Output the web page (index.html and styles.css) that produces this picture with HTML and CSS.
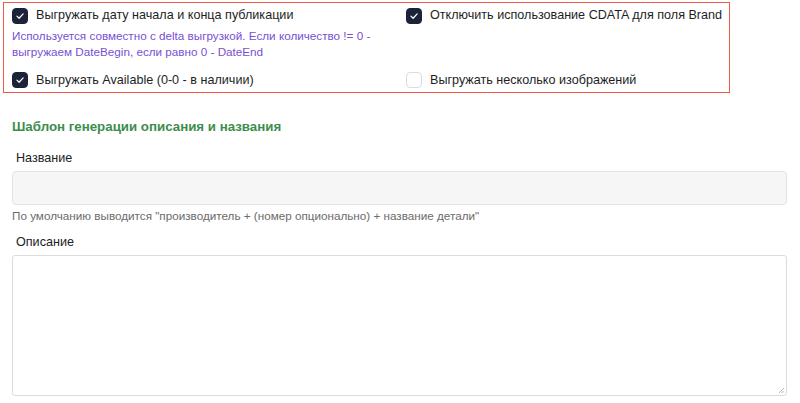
FILE: index.html
```html
<!DOCTYPE html>
<html lang="ru">
<head>
<meta charset="utf-8">
<link rel="stylesheet" href="styles.css">
</head>
<body>
<div class="page">
  <div class="options">
    <div class="col">
      <label class="check"><span class="box on"><svg viewBox="0 0 16 16"><path d="M4.5 8.2 L7 10.6 L11.6 5.6" /></svg></span>Выгружать дату начала и конца публикации</label>
      <p class="hint">Используется совместно с delta выгрузкой. Если количество != 0 - выгружаем DateBegin, если равно 0 - DateEnd</p>
      <label class="check bottom"><span class="box on"><svg viewBox="0 0 16 16"><path d="M4.5 8.2 L7 10.6 L11.6 5.6" /></svg></span>Выгружать Available (0-0 - в наличии)</label>
    </div>
    <div class="col">
      <label class="check"><span class="box on"><svg viewBox="0 0 16 16"><path d="M4.5 8.2 L7 10.6 L11.6 5.6" /></svg></span>Отключить использование CDATA для поля Brand</label>
      <div class="spacer"></div>
      <label class="check bottom"><span class="box"></span>Выгружать несколько изображений</label>
    </div>
  </div>

  <h3 class="section">Шаблон генерации описания и названия</h3>

  <div class="field">
    <div class="label">Название</div>
    <div class="input"></div>
    <div class="help">По умолчанию выводится "производитель + (номер опционально) + название детали"</div>
  </div>

  <div class="field">
    <div class="label">Описание</div>
    <div class="textarea"><svg class="grip" viewBox="0 0 8 8"><path d="M7 2 L2 7 M7 4.5 L4.5 7 M7 6.5 L6.5 7"/></svg></div>
  </div>
</div>
</body>
</html>
```

FILE: styles.css
```css
* { box-sizing: border-box; }
html, body { margin: 0; padding: 0; background: #fff; }
body {
  font-family: "Liberation Sans", Arial, sans-serif;
  color: #1f1f1f;
  font-size: 13px;
}
.page {
  padding: 2px 13px 0 3px;
}
.options {
  width: 727px;
  border: 1px solid #ee5a45;
  display: grid;
  grid-template-columns: 394px 1fr;
  padding: 4px 8px 3px 8px;
}
.col {
  display: flex;
  flex-direction: column;
}
.check {
  display: flex;
  align-items: center;
  height: 17px;
  font-size: 12.6px;
  color: #1e1e1e;
  line-height: 17px;
  white-space: nowrap;
}
.box {
  width: 16px;
  height: 16px;
  border-radius: 4px;
  border: 1px solid #d8dbe0;
  background: #fff;
  margin-right: 8px;
  flex: none;
  display: flex;
}
.box.on {
  background: #1c2238;
  border-color: #1c2238;
}
.box svg {
  width: 14px;
  height: 14px;
  fill: none;
  stroke: #fff;
  stroke-width: 1.4;
  stroke-linecap: round;
  stroke-linejoin: round;
}
.hint {
  margin: 4px 0 0 0;
  max-width: 372px;
  font-size: 11.7px;
  line-height: 16px;
  color: #7a4fd4;
}
.spacer { flex: 1; }
.check.bottom { margin-top: 11.5px; }
.section {
  margin: 25px 0 0 9px;
  font-size: 13.3px;
  font-weight: bold;
  color: #3d8d4d;
  line-height: 18px;
}
.field {
  margin-left: 9px;
}
.label {
  margin: 14px 0 0 4px;
  font-size: 12.6px;
  line-height: 16px;
  color: #222;
}
.input {
  margin-top: 5px;
  height: 34px;
  background: #f6f6f6;
  border: 1px solid #e2e2e2;
  border-radius: 4px;
}
.help {
  margin-top: 4px;
  font-size: 11.7px;
  line-height: 14px;
  color: #6b6b6b;
}
.field + .field .label { margin-top: 11px; }
.textarea {
  margin-top: 5px;
  height: 141px;
  background: #fff;
  border: 1px solid #dcdcdc;
  border-radius: 3px;
  position: relative;
}
.grip {
  position: absolute;
  right: 1px;
  bottom: 1px;
  width: 8px;
  height: 8px;
  stroke: #a8a8a8;
  stroke-width: 0.8;
  fill: none;
}
```
